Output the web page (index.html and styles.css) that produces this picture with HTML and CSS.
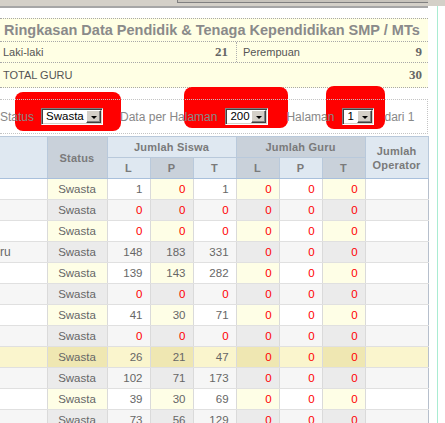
FILE: index.html
```html
<!DOCTYPE html>
<html>
<head>
<meta charset="utf-8">
<link rel="stylesheet" href="styles.css">
</head>
<body>
<div class="strip"><div class="strip-box"></div></div>
<div class="page">
  <div class="content">
    <div class="rule"></div>
    <div class="summary">
      <div class="sum-title">Ringkasan Data Pendidik &amp; Tenaga Kependidikan SMP / MTs</div>
      <div class="sum-row">
        <div class="sum-cell half"><span>Laki-laki</span><b>21</b></div>
        <div class="sum-cell half second"><span>Perempuan</span><b>9</b></div>
      </div>
      <div class="sum-row total">
        <div class="sum-cell full"><span>TOTAL GURU</span><b>30</b></div>
      </div>
    </div>
    <div class="filter-wrap">
      <div class="mark m1"></div>
      <div class="mark m2"></div>
      <div class="mark m3"></div>
      <div class="filter">
        <span class="lbl">Status</span>
        <span class="sel s1"><span class="sel-text">Swasta</span><span class="sel-btn"><i></i></span></span>
        <span class="lbl l2">Data per Halaman</span>
        <span class="sel s2"><span class="sel-text">200</span><span class="sel-btn"><i></i></span></span>
        <span class="lbl l3">Halaman</span>
        <span class="sel s3"><span class="sel-text">1</span><span class="sel-btn"><i></i></span></span>
        <span class="lbl l4">dari 1</span>
      </div>
    </div>
    <table class="grid">
      <colgroup>
        <col class="c-name"><col class="c-status"><col class="c-num"><col class="c-num"><col class="c-num"><col class="c-num"><col class="c-num"><col class="c-num"><col class="c-op">
      </colgroup>
      <thead>
        <tr>
          <th rowspan="2" class="lt"></th>
          <th rowspan="2" class="dk">Status</th>
          <th colspan="3" class="lt">Jumlah Siswa</th>
          <th colspan="3" class="dk">Jumlah Guru</th>
          <th rowspan="2" class="lt op">Jumlah<br>Operator</th>
        </tr>
        <tr class="sub">
          <th class="lt">L</th><th class="dk">P</th><th class="lt">T</th>
          <th class="dk">L</th><th class="lt">P</th><th class="dk">T</th>
        </tr>
      </thead>
      <tbody>
        <tr class="r1"><td class="nm"></td><td class="a st">Swasta</td><td>1</td><td class="a z">0</td><td>1</td><td class="a z">0</td><td class="z">0</td><td class="a z">0</td><td class="op"></td></tr>
        <tr class="r2"><td class="nm"></td><td class="a st">Swasta</td><td class="z">0</td><td class="a z">0</td><td class="z">0</td><td class="a z">0</td><td class="z">0</td><td class="a z">0</td><td class="op"></td></tr>
        <tr class="r1"><td class="nm"></td><td class="a st">Swasta</td><td class="z">0</td><td class="a z">0</td><td class="z">0</td><td class="a z">0</td><td class="z">0</td><td class="a z">0</td><td class="op"></td></tr>
        <tr class="r2"><td class="nm">ru</td><td class="a st">Swasta</td><td>148</td><td class="a">183</td><td>331</td><td class="a z">0</td><td class="z">0</td><td class="a z">0</td><td class="op"></td></tr>
        <tr class="r1"><td class="nm"></td><td class="a st">Swasta</td><td>139</td><td class="a">143</td><td>282</td><td class="a z">0</td><td class="z">0</td><td class="a z">0</td><td class="op"></td></tr>
        <tr class="r2"><td class="nm"></td><td class="a st">Swasta</td><td class="z">0</td><td class="a z">0</td><td class="z">0</td><td class="a z">0</td><td class="z">0</td><td class="a z">0</td><td class="op"></td></tr>
        <tr class="r1"><td class="nm"></td><td class="a st">Swasta</td><td>41</td><td class="a">30</td><td>71</td><td class="a z">0</td><td class="z">0</td><td class="a z">0</td><td class="op"></td></tr>
        <tr class="r2"><td class="nm"></td><td class="a st">Swasta</td><td class="z">0</td><td class="a z">0</td><td class="z">0</td><td class="a z">0</td><td class="z">0</td><td class="a z">0</td><td class="op"></td></tr>
        <tr class="hl"><td class="nm"></td><td class="a st">Swasta</td><td>26</td><td class="a">21</td><td>47</td><td class="a z">0</td><td class="z">0</td><td class="a z">0</td><td class="op"></td></tr>
        <tr class="r2"><td class="nm"></td><td class="a st">Swasta</td><td>102</td><td class="a">71</td><td>173</td><td class="a z">0</td><td class="z">0</td><td class="a z">0</td><td class="op"></td></tr>
        <tr class="r1"><td class="nm"></td><td class="a st">Swasta</td><td>39</td><td class="a">30</td><td>69</td><td class="a z">0</td><td class="z">0</td><td class="a z">0</td><td class="op"></td></tr>
        <tr class="r2"><td class="nm"></td><td class="a st">Swasta</td><td>73</td><td class="a">56</td><td>129</td><td class="a z">0</td><td class="z">0</td><td class="a z">0</td><td class="op"></td></tr>
      </tbody>
    </table>
  </div>
</div>
</body>
</html>
```
FILE: styles.css
```css
html, body {
  margin: 0;
  padding: 0;
  background: #fff;
  overflow: hidden;
}
body {
  width: 445px;
  font-family: "Liberation Sans", Arial, sans-serif;
}
.strip {
  height: 6px;
  background: #d4d0c8;
}
.strip-box {
  margin-left: 177px;
  width: 250px;
  height: 2px;
  border-left: 1px solid #808080;
  border-bottom: 1px solid #808080;
  background: #c8c4bc;
}
.page {
  width: 437px;
  border-right: 1px solid #a9ecd2;
  height: 417px;
}
.content {
  width: 428px;
}
.rule {
  height: 2px;
  background: #a6a6a6;
}
.summary {
  margin-top: 10px;
  background: #ffffe4;
  border-bottom: 1px dotted #a8a8a8;
}
.sum-title {
  border-top: 1px dotted #a8a8a8;
  height: 22px;
  line-height: 22px;
  padding-left: 4px;
  font-size: 14.5px;
  font-weight: bold;
  color: #8a8a8a;
  white-space: nowrap;
}
.sum-row {
  display: flex;
  border-top: 1px dotted #a8a8a8;
  height: 20px;
}
.sum-row.total {
  height: 24px;
}
.sum-cell {
  display: flex;
  justify-content: space-between;
  align-items: center;
  box-sizing: border-box;
  padding: 0 6px 0 3px;
}
.sum-cell span {
  font-size: 11px;
  color: #555;
}
.sum-cell b {
  font-family: "Liberation Serif", "Times New Roman", serif;
  font-size: 13px;
  color: #666;
}
.sum-cell.half {
  width: 236px;
  padding-right: 8px;
}
.sum-cell.second {
  width: 192px;
  border-left: 1px dotted #b0b0b0;
  padding-left: 6px;
  padding-right: 6px;
}
.sum-cell.full {
  width: 428px;
}
.filter-wrap {
  position: relative;
  margin-top: 11px;
}
.mark {
  position: absolute;
  background: #ff0000;
  border-radius: 8px;
  z-index: 0;
}
.m1 { left: 15px; top: -7px; width: 106px; height: 39px; }
.m2 { left: 184px; top: -12px; width: 104px; height: 41px; }
.m3 { left: 326px; top: -13px; width: 59px; height: 43px; }
.filter {
  position: relative;
  z-index: 1;
  display: flex;
  align-items: center;
  height: 33px;
  border-top: 1px dotted #c4c4c4;
  border-bottom: 1px dotted #c4c4c4;
  border-right: 1px dotted #c4c4c4;
  box-sizing: content-box;
  width: 427px;
}
.lbl {
  font-size: 12px;
  color: #888;
  white-space: nowrap;
}
.l2 { margin-left: 17px; }
.l3 { margin-left: 18px; }
.l4 { margin-left: 10px; }
.sel {
  display: flex;
  align-items: center;
  box-sizing: border-box;
  height: 17px;
  background: #fff;
  border: 1px solid;
  border-color: #808080 #ffffff #ffffff #808080;
  box-shadow: inset 1px 1px 0 #404040, inset -1px -1px 0 #d4d0c8;
}
.s1 { width: 62px; margin-left: 7px; }
.s2 { width: 43px; margin-left: 8px; }
.s3 { width: 32px; margin-left: 8px; }
.sel-text {
  flex: 1;
  font-size: 11.5px;
  color: #000;
  padding-left: 4px;
  line-height: 15px;
}
.sel-btn {
  display: flex;
  align-items: center;
  justify-content: center;
  box-sizing: border-box;
  width: 15px;
  height: 13px;
  margin-right: 1px;
  background: #d4d0c8;
  border: 1px solid;
  border-color: #ffffff #404040 #404040 #ffffff;
  box-shadow: inset -1px -1px 0 #808080;
}
.sel-btn i {
  width: 0;
  height: 0;
  border-left: 3px solid transparent;
  border-right: 3px solid transparent;
  border-top: 3px solid #000;
  margin-top: 1px;
}
.grid {
  margin-top: 2px;
  width: 428px;
  border-collapse: collapse;
  table-layout: fixed;
  font-size: 11.5px;
}
.c-name { width: 47px; }
.c-status { width: 60px; }
.c-num { width: 43px; }
.c-op { width: 63px; }
.grid th {
  padding: 0;
  height: 20px;
  line-height: 20px;
  font-size: 11px;
  font-weight: bold;
  letter-spacing: 0.2px;
  color: #7a7a7a;
  border: 1px solid #b9c9db;
  text-align: center;
}
.grid th:first-child { border-left: none; }
.grid th.lt { background: #dfe8f1; }
.grid th.dk { background: #c9d1da; }
.grid th.op {
  line-height: 14px;
}
.grid thead tr.sub th {
  border-bottom: 1px solid #a9c0dc;
}
.grid thead tr:first-child th[rowspan] {
  border-bottom: 1px solid #a9c0dc;
}
.grid td {
  padding: 0 7px 0 0;
  height: 20px;
  line-height: 20px;
  color: #666;
  text-align: right;
  border-bottom: 1px solid #e0e0e0;
  border-right: 1px solid #dadada;
  white-space: nowrap;
  overflow: hidden;
}
.grid td.nm {
  text-align: left;
  padding: 0;
  font-size: 12px;
}
.grid td.st {
  text-align: center;
  padding: 0;
}
.grid td.op {
  border-right: 1px solid #b6bfcc;
}
.grid td.z { color: #ff0000; }
.r1 td { background: #ffffff; }
.r1 td.a { background: #fefee6; }
.r2 td { background: #f6f6f6; }
.r2 td.a { background: #ebebeb; }
.hl td { background: #faf5cd; }
.hl td.a { background: #efe7b2; }
```
